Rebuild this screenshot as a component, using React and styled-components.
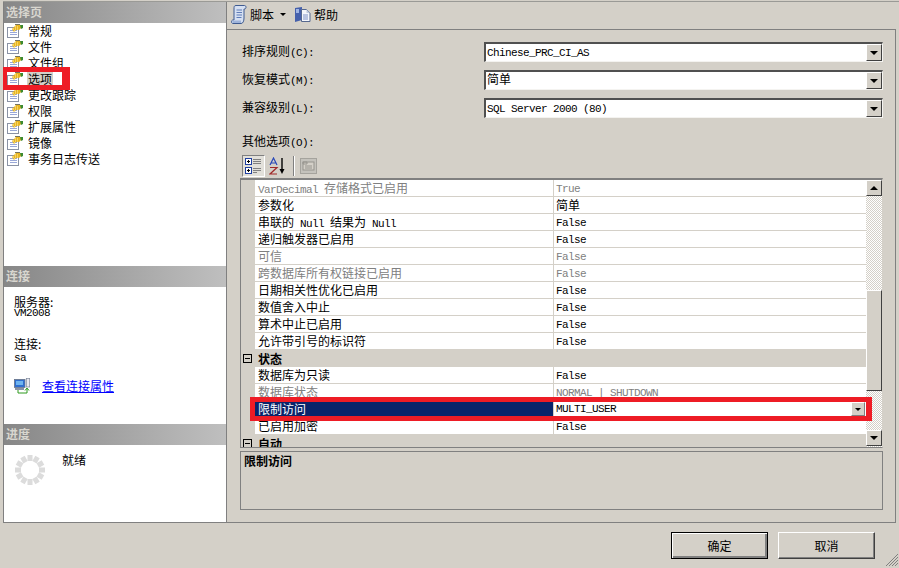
import React from 'react';
import styled, { createGlobalStyle } from 'styled-components';

const Global = createGlobalStyle`
  html, body { margin: 0; padding: 0; background: #d4d0c8; }
  * { box-sizing: border-box; }
`;
const cjk = `"Noto Sans CJK SC", "Liberation Sans", sans-serif`;
const mono = `"Liberation Mono", "Noto Sans CJK SC", monospace`;

const Page = styled.div`
  position: relative; width: 899px; height: 568px; overflow: hidden;
  background: #d4d0c8; font: 12px/16px ${cjk}; color: #000;
  padding: 1px 3px 0 3px; display: flex; flex-direction: column;
`;
const Main = styled.div`
  display: flex; height: 522px; border-top: 1px solid #9a9a96; margin-right: -3px;
`;
const Side = styled.aside`
  width: 224px; display: flex; flex-direction: column; background: #fff;
  border-left: 1px solid #808080; border-right: 1px solid #808080; border-bottom: 1px solid #808080;
`;
const SideHead = styled.div`
  height: 21px; flex: none; padding: 0 2px; background: linear-gradient(90deg, #878787, #bfbfbf);
  color: #d8d6cf; font-weight: 700; font-size: 12px; line-height: 20px; letter-spacing: 0;
`;
const PageList = styled.ul`
  list-style: none; margin: 0; padding: 0; height: 243px; flex: none;
`;
const PageItem = styled.li`
  height: 16px; display: flex; align-items: center; padding-left: 3px;
`;
const PageLabel = styled.span`
  margin-left: 4px; padding: 0 1px; line-height: 14px;
  background: ${p => (p.$active ? '#d4d0c8' : 'transparent')};
`;
const ConnBody = styled.div`
  height: 137px; flex: none; padding: 8px 10px 0 10px;
`;
const ConnLabel = styled.div` height: 12px; line-height: 14px; `;
const ConnValue = styled.div`
  height: 12px; line-height: 12px; font-family: ${mono}; font-size: 11px; letter-spacing: -0.6px;
  margin-top: ${p => p.$top || 0}px;
  margin-bottom: ${p => p.$gap || 0}px;
`;
const ConnLink = styled.a`
  display: flex; align-items: center; gap: 12px; color: #0000ff; margin-top: 14px;
  span { text-decoration: underline; }
`;
const ProgressBody = styled.div`
  flex: 1; display: flex; padding: 9px 0 0 10px; gap: 16px;
`;
const Ready = styled.div` line-height: 14px; margin-top: -1px; `;

const Pane = styled.section`
  flex: 1; display: flex; flex-direction: column; padding-right: 3px;
`;
const ToolBar = styled.div`
  height: 28px; flex: none; display: flex; align-items: center; padding: 0 0 2px 4px;
  border-bottom: 1px solid #808080; font-size: 12px;
`;
const ToolLabel = styled.span` margin-left: 3px; `;
const Caret = styled.i`
  width: 0; height: 0; margin: 0 9px 0 6px; border: 3px solid transparent; border-top: 3px solid #000; border-bottom: 0;
`;
const Content = styled.div`
  flex: 1; display: flex; flex-direction: column; padding: 12px 12px 0 15px;
  border-right: 1px solid #808080; border-bottom: 1px solid #808080;
`;
const FormRow = styled.div`
  display: flex; align-items: center; height: 20px; margin-bottom: 8px;
`;
const Label = styled.label`
  width: 242px; flex: none; display: block; line-height: 16px; white-space: nowrap;
`;
const Lat = styled.span`
  font-family: ${mono}; font-size: 11px; letter-spacing: -0.6px; white-space: pre;
`;
const Combo = styled.div`
  width: 399px; height: 20px; display: flex; align-items: stretch; background: #fff;
  border-top: 2px solid #505050; border-left: 2px solid #505050; border-right: 1px solid #f4f3f0; border-bottom: 1px solid #f4f3f0;
`;
const ComboText = styled.div`
  flex: 1; padding-left: 1px; line-height: 14px; white-space: nowrap;
`;
const ArrowButton = styled.div`
  width: 16px; flex: none; display: flex; align-items: center; justify-content: center;
  background: #d4d0c8; border: 1px solid; border-color: #fff #404040 #404040 #fff;
`;
const Arrow = styled.i`
  width: 0; height: 0; border-left: 4px solid transparent; border-right: 4px solid transparent;
  ${p => (p.$up ? 'border-bottom: 4px solid #000;' : 'border-top: 4px solid #000;')}
`;
const OtherLabel = styled.div`
  margin-top: 7px; height: 16px; line-height: 16px;
`;
const GridTools = styled.div`
  height: 23px; margin-top: 6px; display: flex; align-items: flex-start; flex: none;
`;
const PressedTool = styled.div`
  width: 23px; height: 22px; display: flex; align-items: center; justify-content: center;
  border: 1px solid; border-color: #808080 #fff #fff #808080;
  background: #e2e0da;
`;
const PlainTool = styled.div`
  margin-left: ${p => p.$gap}px; width: 20px; height: 22px; display: flex; align-items: center; justify-content: center;
`;
const ToolSep = styled.div`
  width: 2px; height: 20px; margin: 1px 0 0 6px; border-left: 1px solid #808080; border-right: 1px solid #fff;
`;
const Grid = styled.div`
  height: 270px; flex: none; display: flex; margin-left: -2px;
  border: 1px solid; border-color: #808080 transparent #808080 #808080; border-top-width: 2px; border-bottom-width: 1px;
  width: 643px; overflow: hidden;
`;
const Rows = styled.div` flex: 1; overflow: hidden; `;
const Row = styled.div`
  height: 17px; display: flex; padding-left: 14px; border-bottom: 1px solid #d4d0c8;
`;
const NameCell = styled.div`
  width: 298px; flex: none; padding-left: 3px; line-height: 16px; white-space: nowrap;
  background: ${p => (p.$sel ? '#0a246a' : '#fff')};
  color: ${p => (p.$sel ? '#fff' : p.$off ? '#808080' : '#000')};
`;
const ValueCell = styled.div`
  flex: 1; background: #fff; border-left: 1px solid #d4d0c8; display: flex; align-items: center; padding-left: 2px;
  padding-top: ${p => (p.$cjk ? 0 : 1)}px;
  justify-content: space-between; line-height: 16px; white-space: nowrap;
  color: ${p => (p.$off ? '#808080' : '#000')};
`;
const RowDrop = styled.div`
  width: 14px; height: 14px; margin-right: 1px; display: flex; align-items: center; justify-content: center;
  background: #d4d0c8; border: 1px solid; border-color: #fff #808080 #808080 #fff;
`;
const SmallArrow = styled.i`
  width: 0; height: 0; border-left: 3px solid transparent; border-right: 3px solid transparent; border-top: 3px solid #000;
`;
const GroupRow = styled.div`
  height: 17px; display: flex; align-items: center; font-weight: 700; padding-left: 2px;
`;
const Collapse = styled.span`
  width: 9px; height: 9px; border: 1px solid #000; position: relative; margin-right: 6px; flex: none;
  &::after { content: ''; position: absolute; left: 1px; right: 1px; top: 3px; height: 1px; background: #000; }
`;
const ScrollBar = styled.div`
  width: 16px; flex: none; display: flex; flex-direction: column; padding-bottom: 1px;
  background: repeating-conic-gradient(#fff 0 25%, #d4d0c8 0 50%) 0 0 / 2px 2px;
`;
const ScrollBtn = styled.div`
  height: 16px; flex: none; display: flex; align-items: center; justify-content: center; background: #d4d0c8;
  border: 1px solid; border-color: #fff #404040 #404040 #fff;
`;
const Thumb = styled.div`
  height: 101px; flex: none; margin-top: 94px; margin-bottom: auto; background: #d4d0c8;
  border: 1px solid; border-color: #fff #404040 #404040 #fff;
`;
const Desc = styled.div`
  height: 59px; margin: 3px 0 0 -2px; width: 643px; flex: none; padding: 1px 3px; border: 1px solid #808080; font-weight: 700;
`;
const Footer = styled.div`
  height: 44px; flex: none; display: flex; justify-content: flex-end; gap: 10px; padding: 9px 21px 0 0; position: relative;
`;
const DlgButton = styled.button`
  width: 97px; height: 27px; padding: 0; font: 12px/16px ${cjk}; color: #000; background: #d4d0c8;
  border: 1px solid #000; box-shadow: ${p => (p.$def ? 'inset 1px 1px 0 #fff, inset -2px -2px 0 #808080' : 'none')};
  ${p => !p.$def && 'border-color: #fff #404040 #404040 #fff; box-shadow: inset -1px -1px 0 #808080;'}
`;
const Grip = styled.svg` position: absolute; right: -3px; bottom: 0; `;
const Mark = styled.div`
  position: absolute; pointer-events: none; border: 5px solid #ee1c25;
`;
const SideMark = styled(Mark)` left: 3px; top: 67px; width: 67px; height: 23px; border-width: 5px 8px 5px 4px; `;
const GridMark = styled(Mark)` left: 250px; top: 397px; width: 622px; height: 24px; border-right-width: 6px; `;

const PageIcon = () => (
  <svg width="16" height="16" viewBox="0 0 16 16">
    <rect x="0.5" y="4.5" width="11" height="10" fill="#fff" stroke="#8a92a4" />
    <path d="M3 7.5h7M3 9.5h7M3 11.5h7" stroke="#9aa8d8" />
    <path d="M5 6l4-4h4l2 2-3 3H9l-2 2z" fill="#e8b420" />
    <path d="M6 6h1M8 4h1M8 6h1M10 4h1M7 8h1M10 6h1" stroke="#fff2a8" />
    <path d="M8 1h5v1H8z" fill="#77745c" />
    <path d="M13 2h3v3l-2 1z" fill="#3c8a30" />
  </svg>
);
const ScriptIcon = () => (
  <svg width="16" height="19" viewBox="0 0 16 19">
    <path d="M5 0.5h8.5c2 0 2 3.5 0 3.5H13v9c0 3-1 5.5-3 5.5H2c-2 0-2-3.5 0-3.5h1V4c0-2 0-3.5 2-3.5z" fill="#d6e0f2" stroke="#3f5b90" />
    <path d="M5.5 5h5.5M5.5 7.5h5.5M5.5 10h5.5M5.5 12.500h5" stroke="#5f7cb8" />
    <path d="M1 15.500h9v2.500H2z" fill="#9fb4da" />
  </svg>
);
const HelpIcon = () => (
  <svg width="16" height="15" viewBox="0 0 16 15">
    <path d="M0 1l7-1v13l-7 2z" fill="#4560ac" />
    <path d="M1 2h3v4H1z" fill="#9fb4e4" />
    <path d="M6.500 2.500h5l3.500 3.500v8.500H6.500z" fill="#f4f6fb" stroke="#56688f" />
    <path d="M11.500 2.500V6H15z" fill="#c0cade" />
    <path d="M8 8h5M8 10h5M8 12h5" stroke="#7f92c8" />
  </svg>
);
const ConnIcon = () => (
  <svg width="16" height="16" viewBox="0 0 16 16">
    <rect x="0.400" y="1.400" width="10.600" height="8" fill="#2f6fd0" stroke="#6a7488" strokeWidth="0.800" />
    <rect x="2" y="3" width="7" height="4" fill="#6fb4f0" />
    <rect x="1" y="10" width="9" height="2" fill="#8a93a6" />
    <rect x="12.300" y="0.300" width="3.400" height="8.700" fill="#e8e8ee" stroke="#7a8498" strokeWidth="0.700" />
    <path d="M4 12v3h9v-4M11 12.500l2-2.500 2 2.500" fill="none" stroke="#2e9a1e" />
  </svg>
);
const Spinner = () => (
  <svg width="32" height="32" viewBox="0 0 32 32">
    {Array.from({ length: 12 }).map((_, i) => (
      <rect key={i} x="13.500" y="1" width="5" height="6" fill="#dcdcdc" transform={`rotate(${i * 30} 16 16)`} />
    ))}
  </svg>
);
const CategoryIcon = () => (
  <svg width="17" height="17" viewBox="0 0 17 17">
    <rect x="0.500" y="0.500" width="6" height="6" fill="#fff" stroke="#1f3fa0" />
    <path d="M2 3.500h3M3.500 2v3" stroke="#000" />
    <rect x="0.500" y="9.500" width="6" height="6" fill="#fff" stroke="#1f3fa0" />
    <path d="M2 12.500h3M3.500 11v3" stroke="#000" />
    <path d="M8 1.500h8M8 3.500h8M8 5.500h8M8 10.500h8M8 12.500h8M8 14.500h4" stroke="#808080" />
  </svg>
);
const SortIcon = () => (
  <svg width="17" height="18" viewBox="0 0 17 18">
    <path d="M1 8L4.500 1 8 8M2.500 6h4" fill="none" stroke="#2848b8" strokeWidth="1.200" />
    <path d="M1 10.500h7L1 17h7" fill="none" stroke="#a02828" strokeWidth="1.200" />
    <path d="M13 1v13" stroke="#000" strokeWidth="1.400" />
    <path d="M10.500 12h5L13 17z" fill="#000" />
  </svg>
);
const PropPageIcon = () => (
  <svg width="17" height="16" viewBox="0 0 17 16">
    <rect x="0.500" y="0.500" width="16" height="15" fill="#c4c2bc" stroke="#a5a39d" />
    <rect x="3" y="4" width="11" height="8" fill="#d4d0c8" stroke="#96948e" />
    <path d="M3 4h4v2H3zM5 8h7M5 10h7" fill="none" stroke="#96948e" />
  </svg>
);

const pages = ['常规', '文件', '文件组', '选项', '更改跟踪', '权限', '扩展属性', '镜像', '事务日志传送'];

const rows = [
  { n: <><Lat>VarDecimal </Lat>存储格式已启用</>, v: 'True', off: true, nameOff: true },
  { n: '参数化', v: '简单', cjkV: true },
  { n: <>串联的<Lat> Null </Lat>结果为<Lat> Null</Lat></>, v: 'False' },
  { n: '递归触发器已启用', v: 'False' },
  { n: '可信', v: 'False', off: true, nameOff: true },
  { n: '跨数据库所有权链接已启用', v: 'False', off: true, nameOff: true },
  { n: '日期相关性优化已启用', v: 'False' },
  { n: '数值舍入中止', v: 'False' },
  { n: '算术中止已启用', v: 'False' },
  { n: '允许带引号的标识符', v: 'False' },
  { group: '状态' },
  { n: '数据库为只读', v: 'False' },
  { n: '数据库状态', v: 'NORMAL | SHUTDOWN', off: true, nameOff: true },
  { n: '限制访问', v: 'MULTI_USER', sel: true },
  { n: '已启用加密', v: 'False' },
  { group: '自动' },
];

export default function App() {
  return (
    <Page>
      <Global />
      <Main>
        <Side>
          <SideHead>选择页</SideHead>
          <PageList>
            {pages.map(p => (
              <PageItem key={p}>
                <PageIcon />
                <PageLabel $active={p === '选项'}>{p}</PageLabel>
              </PageItem>
            ))}
          </PageList>
          <SideHead>连接</SideHead>
          <ConnBody>
            <ConnLabel>服务器:</ConnLabel>
            <ConnValue $gap={18}>VM2008</ConnValue>
            <ConnLabel>连接:</ConnLabel>
            <ConnValue $top={3}>sa</ConnValue>
            <ConnLink><ConnIcon /><span>查看连接属性</span></ConnLink>
          </ConnBody>
          <SideHead>进度</SideHead>
          <ProgressBody>
            <Spinner />
            <Ready>就绪</Ready>
          </ProgressBody>
        </Side>
        <Pane>
          <ToolBar>
            <ScriptIcon />
            <ToolLabel>脚本</ToolLabel>
            <Caret />
            <HelpIcon />
            <ToolLabel>帮助</ToolLabel>
          </ToolBar>
          <Content>
            <FormRow><Label>排序规则<Lat>(C):</Lat></Label><Combo><ComboText><Lat>Chinese_PRC_CI_AS</Lat></ComboText><ArrowButton><Arrow /></ArrowButton></Combo></FormRow>
            <FormRow><Label>恢复模式<Lat>(M):</Lat></Label><Combo><ComboText>简单</ComboText><ArrowButton><Arrow /></ArrowButton></Combo></FormRow>
            <FormRow><Label>兼容级别<Lat>(L):</Lat></Label><Combo><ComboText><Lat>SQL Server 2000 (80)</Lat></ComboText><ArrowButton><Arrow /></ArrowButton></Combo></FormRow>
            <OtherLabel>其他选项<Lat>(O):</Lat></OtherLabel>
            <GridTools>
              <PressedTool><CategoryIcon /></PressedTool>
              <PlainTool $gap={2}><SortIcon /></PlainTool>
              <ToolSep />
              <PlainTool $gap={3}><PropPageIcon /></PlainTool>
            </GridTools>
            <Grid>
              <Rows>
                {rows.map((r, i) => r.group ? (
                  <GroupRow key={i}><Collapse />{r.group}</GroupRow>
                ) : (
                  <Row key={i}>
                    <NameCell $off={r.nameOff} $sel={r.sel}>{r.n}</NameCell>
                    <ValueCell $off={r.off} $cjk={r.cjkV || r.sel}>
                      {r.cjkV ? r.v : <Lat>{r.v}</Lat>}
                      {r.sel && <RowDrop><SmallArrow /></RowDrop>}
                    </ValueCell>
                  </Row>
                ))}
              </Rows>
              <ScrollBar>
                <ScrollBtn><Arrow $up /></ScrollBtn>
                <Thumb />
                <ScrollBtn><Arrow /></ScrollBtn>
              </ScrollBar>
            </Grid>
            <Desc>限制访问</Desc>
          </Content>
        </Pane>
      </Main>
      <Footer>
        <DlgButton $def>确定</DlgButton>
        <DlgButton>取消</DlgButton>
        <Grip width="14" height="14" viewBox="0 0 14 14">
          <path d="M13 1L1 13M13 4L4 13M13 7L7 13M13 10L10 13" stroke="#808080" fill="none" />
        </Grip>
      </Footer>
      <SideMark />
      <GridMark />
    </Page>
  );
}
